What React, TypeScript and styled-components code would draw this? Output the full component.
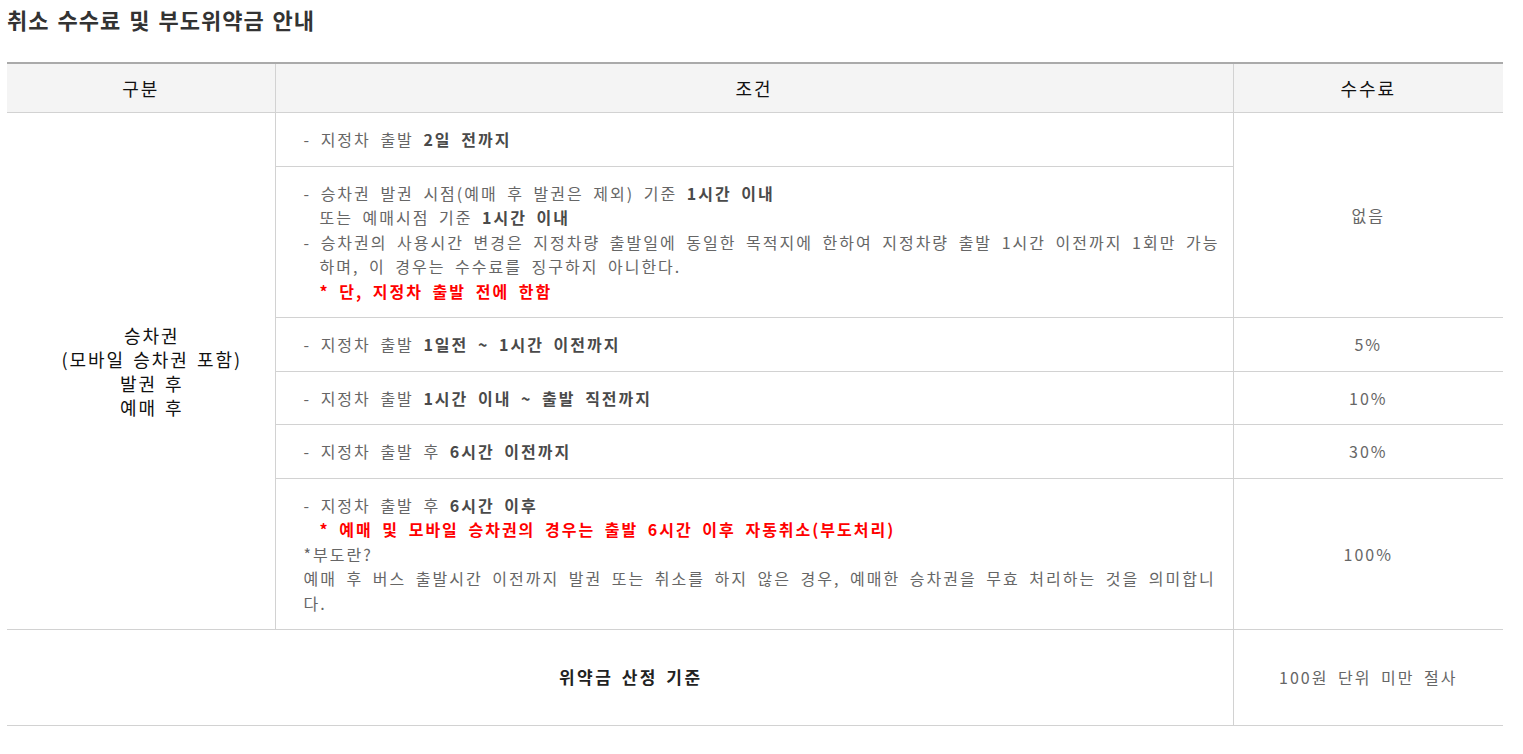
import styled, { createGlobalStyle } from 'styled-components'

const GlobalStyle = createGlobalStyle`
  html, body {
    margin: 0;
    padding: 0;
    background: #ffffff;
  }
  body {
    font-family: "Noto Sans CJK KR", "Noto Sans", sans-serif;
    color: #666666;
  }
`

const Page = styled.div`
  padding: 4px 20px 0 7px;
`

const Title = styled.h2`
  margin: 0;
  font-size: 22px;
  font-weight: 700;
  color: #333333;
  line-height: 30px;
  letter-spacing: 1px;
  word-spacing: 2px;
`

const Table = styled.table`
  width: 100%;
  margin-top: 28px;
  border-collapse: collapse;
  table-layout: fixed;
  border-top: 2px solid #aaaaaa;
  font-size: 16px;
  letter-spacing: 2px;
  word-spacing: 4px;
`

const HeadCell = styled.th`
  height: 48px;
  padding: 0;
  background: #f4f4f4;
  color: #111111;
  font-size: 18px;
  font-weight: 400;
  text-align: center;
  border-bottom: 1px solid #d2d2d2;
  border-right: 1px solid #d2d2d2;

  &:last-child {
    border-right: none;
  }
`

const Cell = styled.td<{ $align?: 'left' | 'center'; $last?: boolean }>`
  padding: 14px 0 14px 28px;
  text-align: ${(p) => p.$align || 'left'};
  vertical-align: middle;
  line-height: 24.5px;
  border-bottom: 1px solid #d2d2d2;
  border-right: ${(p) => (p.$last ? 'none' : '1px solid #d2d2d2')};
  ${(p) => (p.$align === 'center' ? 'padding-left: 0;' : '')}
`

const GroupCell = styled(Cell)`
  padding-left: 22px;
  color: #111111;
  font-size: 18px;
  line-height: 24px;
  word-spacing: 2px;
`

const PenaltyLabel = styled(Cell)`
  height: 67px;
  padding-left: 22px;
  color: #222222;
  font-size: 17px;
  font-weight: 700;
  letter-spacing: 2.5px;
  word-spacing: 2px;
`

const Line = styled.div<{ $indent?: number }>`
  white-space: nowrap;
  padding-left: ${(p) => p.$indent || 0}px;
`

const Strong = styled.b`
  color: #4a4a4a;
  font-weight: 700;
`

const Red = styled.span`
  color: #ff0000;
  font-weight: 700;
`

export default function App() {
  return (
    <Page>
      <GlobalStyle />
      <Title>취소 수수료 및 부도위약금 안내</Title>
      <Table>
        <colgroup>
          <col style={{ width: 268 }} />
          <col style={{ width: 958 }} />
          <col style={{ width: 270 }} />
        </colgroup>
        <thead>
          <tr>
            <HeadCell>구분</HeadCell>
            <HeadCell>조건</HeadCell>
            <HeadCell>수수료</HeadCell>
          </tr>
        </thead>
        <tbody>
          <tr>
            <GroupCell rowSpan={6} $align="center">
              승차권
              <br />
              (모바일 승차권 포함)
              <br />
              발권 후
              <br />
              예매 후
            </GroupCell>
            <Cell>
              <Line>
                - 지정차 출발 <Strong>2일 전까지</Strong>
              </Line>
            </Cell>
            <Cell rowSpan={2} $align="center" $last>
              없음
            </Cell>
          </tr>
          <tr>
            <Cell>
              <Line>
                - 승차권 발권 시점(예매 후 발권은 제외) 기준 <Strong>1시간 이내</Strong>
              </Line>
              <Line $indent={16}>
                또는 예매시점 기준 <Strong>1시간 이내</Strong>
              </Line>
              <Line>- 승차권의 사용시간 변경은 지정차량 출발일에 동일한 목적지에 한하여 지정차량 출발 1시간 이전까지 1회만 가능</Line>
              <Line $indent={16}>하며, 이 경우는 수수료를 징구하지 아니한다.</Line>
              <Line $indent={16}>
                <Red>* 단, 지정차 출발 전에 한함</Red>
              </Line>
            </Cell>
          </tr>
          <tr>
            <Cell>
              <Line>
                - 지정차 출발 <Strong>1일전 ~ 1시간 이전까지</Strong>
              </Line>
            </Cell>
            <Cell $align="center" $last>
              5%
            </Cell>
          </tr>
          <tr>
            <Cell>
              <Line>
                - 지정차 출발 <Strong>1시간 이내 ~ 출발 직전까지</Strong>
              </Line>
            </Cell>
            <Cell $align="center" $last>
              10%
            </Cell>
          </tr>
          <tr>
            <Cell>
              <Line>
                - 지정차 출발 후 <Strong>6시간 이전까지</Strong>
              </Line>
            </Cell>
            <Cell $align="center" $last>
              30%
            </Cell>
          </tr>
          <tr>
            <Cell>
              <Line>
                - 지정차 출발 후 <Strong>6시간 이후</Strong>
              </Line>
              <Line $indent={16}>
                <Red>* 예매 및 모바일 승차권의 경우는 출발 6시간 이후 자동취소(부도처리)</Red>
              </Line>
              <Line>*부도란?</Line>
              <Line>예매 후 버스 출발시간 이전까지 발권 또는 취소를 하지 않은 경우, 예매한 승차권을 무효 처리하는 것을 의미합니</Line>
              <Line>다.</Line>
            </Cell>
            <Cell $align="center" $last>
              100%
            </Cell>
          </tr>
          <tr>
            <PenaltyLabel colSpan={2} $align="center">
              위약금 산정 기준
            </PenaltyLabel>
            <Cell $align="center" $last>
              100원 단위 미만 절사
            </Cell>
          </tr>
        </tbody>
      </Table>
    </Page>
  )
}
